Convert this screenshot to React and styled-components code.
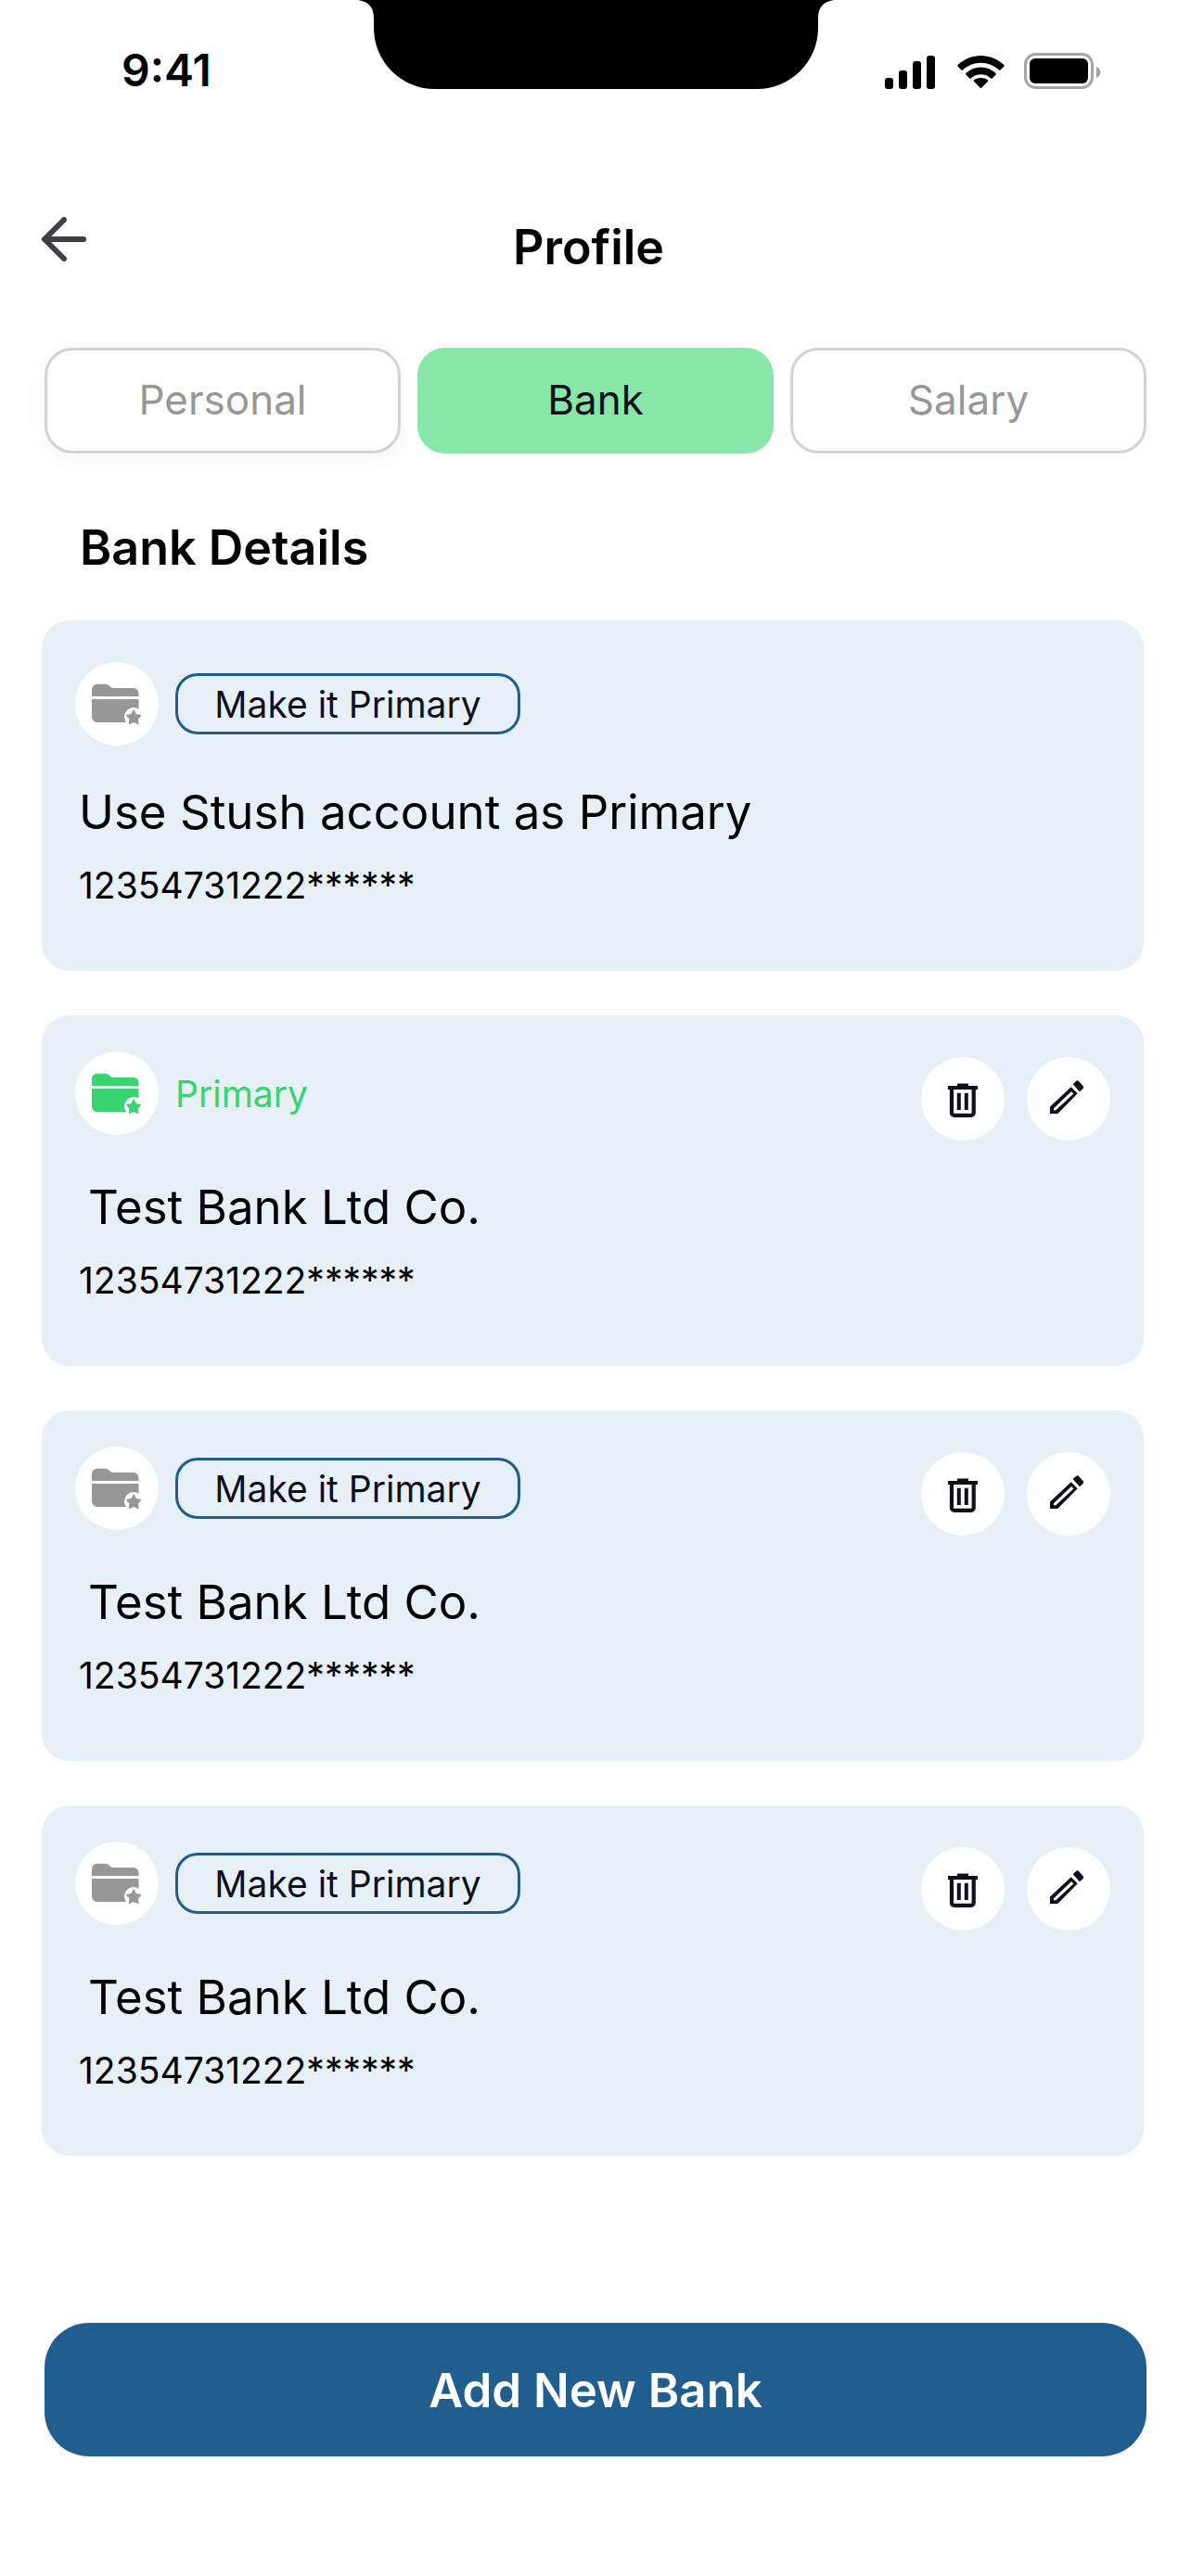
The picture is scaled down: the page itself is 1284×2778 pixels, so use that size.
import styled, { createGlobalStyle } from "styled-components";
import { useState } from "react";

const GlobalStyle = createGlobalStyle`
  * {
    box-sizing: border-box;
  }
  body {
    margin: 0;
    background: #fefefe;
    font-family: Inter, "Liberation Sans", sans-serif;
    color: #000;
  }
  button {
    font-family: inherit;
    padding: 0;
    cursor: pointer;
  }
`;

const Screen = styled.div`
  min-height: 100vh;
  display: flex;
  flex-direction: column;
`;

const StatusBar = styled.div`
  display: grid;
  grid-template-columns: 1fr auto 1fr;
  height: 96px;
`;

const Time = styled.span`
  padding: 56px 0 0 131px;
  font-size: 48px;
  line-height: 40px;
  font-weight: 600;
`;

const Notch = styled.svg`
  width: 513px;
  height: 96px;
`;

const StatusIcons = styled.div`
  display: flex;
  justify-content: flex-end;
  align-items: flex-end;
  padding-right: 96px;
`;

const Header = styled.header`
  display: grid;
  grid-template-columns: 60px 1fr 60px;
  align-items: start;
  padding: 138px 54px 0 39px;
`;

const BackButton = styled.button`
  height: 48px;
  border: none;
  background: none;
  svg {
    display: block;
  }
`;

const Title = styled.h1`
  margin: 0;
  font-size: 52px;
  line-height: 66px;
  font-weight: 600;
  text-align: center;
`;

const Tabs = styled.nav`
  display: flex;
  gap: 18px;
  padding: 75px 48px 0;
`;

const Tab = styled.button`
  flex: 1;
  height: 114px;
  padding-bottom: 2px;
  border: 3px solid ${(props) => (props.$active ? "#88e6a8" : "#d2d3d9")};
  border-radius: 30px;
  background: ${(props) => (props.$active ? "#88e6a8" : "#fefefe")};
  color: ${(props) => (props.$active ? "#0f0f1e" : "#979797")};
  font-size: 44px;
  &:first-child {
    box-shadow: 0 4px 12px rgba(120, 150, 200, 0.08);
  }
`;

const SectionTitle = styled.h2`
  margin: 0;
  padding: 69px 86px 0;
  font-size: 52px;
  line-height: 66px;
  font-weight: 600;
`;

const BankList = styled.main`
  display: flex;
  flex-direction: column;
  gap: 48px;
  padding: 45px 51px 0 45px;
`;

const Card = styled.section`
  padding: 39px 36px 67px;
  border-radius: 30px;
  background: #e7eff7;
`;

const TopRow = styled.div`
  display: flex;
  justify-content: space-between;
  align-items: flex-end;
  height: 96px;
`;

const Account = styled.div`
  display: flex;
  align-items: ${(props) => (props.$builtIn ? "flex-end" : "flex-start")};
  gap: 18px;
  height: 96px;
`;

const Badge = styled.span`
  display: flex;
  align-items: center;
  justify-content: center;
  width: 90px;
  height: 90px;
  border-radius: 50%;
  background: #fff;
  color: ${(props) => (props.$primary ? "#37d46f" : "#979797")};
`;

const PillButton = styled.button`
  width: 372px;
  height: 66px;
  margin: 12px 0;
  border: 3px solid #205e90;
  border-radius: 24px;
  background: none;
  color: #0f0f1e;
  font-size: 39px;
`;

const PrimaryLabel = styled.span`
  font-size: 39px;
  line-height: 92px;
  color: #37d46f;
`;

const Actions = styled.div`
  display: flex;
  gap: 24px;
`;

const RoundButton = styled.button`
  display: flex;
  align-items: center;
  justify-content: center;
  width: 90px;
  height: 90px;
  border: none;
  border-radius: 50%;
  background: #fff;
  color: #0f0f1e;
`;

const BankName = styled.h3`
  margin: 36px 0 0;
  padding-left: ${(props) => (props.$builtIn ? "4px" : "14px")};
  font-size: 51px;
  line-height: 72px;
  font-weight: 400;
`;

const AccountNumber = styled.p`
  margin: 18px 0 0;
  padding-left: 4px;
  font-size: 39px;
  line-height: 50px;
`;

const Footer = styled.footer`
  margin-top: auto;
  padding: 48px 48px 129px;
`;

const AddButton = styled.button`
  width: 100%;
  height: 144px;
  border: none;
  border-radius: 48px;
  background: #205e90;
  color: #fff;
  font-size: 51px;
  font-weight: 600;
`;

const accounts = [
  { id: 1, name: "Use Stush account as Primary", number: "12354731222******", builtIn: true },
  { id: 2, name: "Test Bank Ltd Co.", number: "12354731222******" },
  { id: 3, name: "Test Bank Ltd Co.", number: "12354731222******" },
  { id: 4, name: "Test Bank Ltd Co.", number: "12354731222******" },
];

const SignalIcon = () => (
  <svg width="54" height="39" viewBox="0 0 54 39">
    <rect x="0" y="27" width="9" height="12" rx="3" />
    <rect x="15" y="19" width="9" height="20" rx="3" />
    <rect x="30" y="9" width="9" height="30" rx="3" />
    <rect x="45" y="3" width="9" height="36" rx="3" />
  </svg>
);

const WifiIcon = () => (
  <svg width="96" height="39" viewBox="0 0 96 39">
    <path d="M49.500 10.700c7.300 0 14.300 2.800 19.600 7.800.4.400 1 .4 1.400 0l3.900-3.900c.4-.4.4-1.100 0-1.500C60.500-.3 38.500-.3 24.600 13.100c-.4.400-.4 1.100 0 1.500l3.900 3.900c.4.400 1 .4 1.400 0 5.300-5 12.300-7.800 19.600-7.800z" />
    <path d="M49.500 23.200c4 0 7.900 1.500 10.800 4.200.4.400 1 .4 1.400 0l3.900-3.900c.4-.4.4-1.100 0-1.500-9.100-8.600-23.200-8.600-32.300 0-.4.400-.4 1.100 0 1.500l3.900 3.900c.4.400 1 .4 1.500 0 2.900-2.700 6.800-4.200 10.800-4.200z" />
    <path d="M57.100 30.700c.4-.4.4-1 0-1.300-4.400-3.200-10.800-3.200-15.200 0-.4.300-.4.900 0 1.300l6.900 7.100c.4.400 1 .4 1.400 0z" />
  </svg>
);

const BatteryIcon = () => (
  <svg width="84" height="39" viewBox="0 0 84 39">
    <rect x="1.500" y="1.500" width="72" height="36" rx="11" fill="none" stroke="#a5a5a5" strokeWidth="3" />
    <rect x="6" y="6" width="63" height="27" rx="6" />
    <path d="M78 15v12c3-1 4.500-3.500 4.500-6s-1.500-5-4.500-6z" fill="#a5a5a5" />
  </svg>
);

const BackIcon = () => (
  <svg width="60" height="48" viewBox="0 0 60 48" fill="none" stroke="#3f4047" strokeWidth="6" strokeLinecap="round" strokeLinejoin="round">
    <path d="M51 24H9M30 3L9 24l21 21" />
  </svg>
);

const FolderIcon = () => (
  <svg width="54" height="44" viewBox="0 0 54 44" fill="currentColor" overflow="visible">
    <path d="M0 14V7C0 3 2.500.7 6.500.7H14c5 0 5.500 4.300 9.500 4.300H44c4.500 0 6.500 2.500 6.500 6.500V14z" />
    <path d="M0 17h50.500v18c0 4-2 7-6.500 7H6.500C2.500 42 0 39.500 0 35.500z" />
    <circle cx="45" cy="36" r="10" fill="#fff" />
    <path
      d="M45.200 28.700l2.600 4.900 5.300.8-3.600 4 .6 5.300-4.900-2.200-4.900 2.200.6-5.300-3.600-4 5.300-.8z"
      stroke="currentColor"
      strokeLinejoin="round"
    />
  </svg>
);

const TrashIcon = () => (
  <svg width="36" height="40" viewBox="0 0 36 40" fill="currentColor">
    <path d="M12 3.500h12V6h10v4H2V6h10z" />
    <path d="M6 8v27a2.800 2.800 0 0 0 2.800 2.800h18A2.800 2.800 0 0 0 29.700 35V8" fill="none" stroke="currentColor" strokeWidth="4.200" />
    <path d="M11.800 13.700h4V32h-4zM19.800 13.700h4V32h-4z" />
  </svg>
);

const PencilIcon = () => (
  <svg width="40" height="40" viewBox="0 0 40 40" fill="currentColor">
    <path fillRule="evenodd" d="M0 28.500L22.700 7.300l7 7L8.300 36H0zM4 30.300v1.900h2.300L25.300 14.500l-2.200-2.500z" />
    <path d="M24.700 4.300L28 1c1-1 2.200-1 3.100 0L35.500 6c.9 1 .9 2.200 0 3.100L32 12.300z" />
  </svg>
);

const App = () => {
  const [tab, setTab] = useState("Bank");
  const [primary, setPrimary] = useState(2);

  return (
    <Screen>
      <GlobalStyle />
      <StatusBar>
        <Time>9:41</Time>
        <Notch viewBox="0 0 513 96">
          <path d="M0 0h513c-12 2-17 8-17 20v10c0 36-29 66-66 66H83c-37 0-66-30-66-66V20C17 8 12 2 0 0z" />
        </Notch>
        <StatusIcons>
          <SignalIcon />
          <WifiIcon />
          <BatteryIcon />
        </StatusIcons>
      </StatusBar>
      <Header>
        <BackButton aria-label="Back">
          <BackIcon />
        </BackButton>
        <Title>Profile</Title>
      </Header>
      <Tabs>
        {["Personal", "Bank", "Salary"].map((name) => (
          <Tab key={name} $active={tab === name} onClick={() => setTab(name)}>
            {name}
          </Tab>
        ))}
      </Tabs>
      <SectionTitle>Bank Details</SectionTitle>
      <BankList>
        {accounts.map((item) => (
          <Card key={item.id}>
            <TopRow>
              <Account $builtIn={item.builtIn}>
                <Badge $primary={primary === item.id}>
                  <FolderIcon />
                </Badge>
                {primary === item.id ? (
                  <PrimaryLabel>Primary</PrimaryLabel>
                ) : (
                  <PillButton onClick={() => setPrimary(item.id)}>Make it Primary</PillButton>
                )}
              </Account>
              {!item.builtIn && (
                <Actions>
                  <RoundButton aria-label="Delete">
                    <TrashIcon />
                  </RoundButton>
                  <RoundButton aria-label="Edit">
                    <PencilIcon />
                  </RoundButton>
                </Actions>
              )}
            </TopRow>
            <BankName $builtIn={item.builtIn}>{item.name}</BankName>
            <AccountNumber>{item.number}</AccountNumber>
          </Card>
        ))}
      </BankList>
      <Footer>
        <AddButton>Add New Bank</AddButton>
      </Footer>
    </Screen>
  );
};

export default App;
